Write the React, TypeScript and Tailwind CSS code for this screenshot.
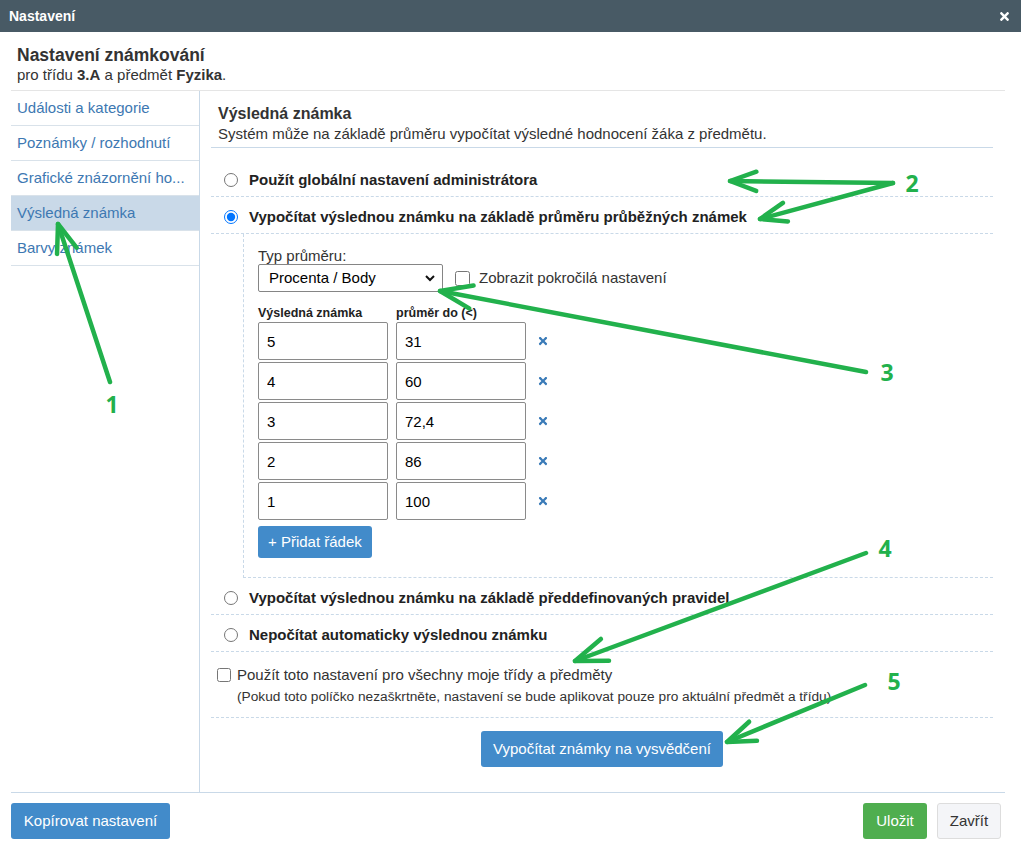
import { FaTimes } from 'react-icons/fa';

const menu = ['Události a kategorie', 'Poznámky / rozhodnutí', 'Grafické znázornění ho...', 'Výsledná známka', 'Barvy známek'];

const rows = [
  ['5', '31'],
  ['4', '60'],
  ['3', '72,4'],
  ['2', '86'],
  ['1', '100'],
];

// green annotation arrows drawn over the screenshot
const arrows = [
  { x1: 110, y1: 382, x2: 58, y2: 224, len: 30 },
  { x1: 893, y1: 183, x2: 730, y2: 181, len: 28 },
  { x1: 893, y1: 183, x2: 760, y2: 219, len: 28 },
  { x1: 866, y1: 372, x2: 440, y2: 291, len: 34 },
  { x1: 866, y1: 553, x2: 575, y2: 661, len: 34 },
  { x1: 865, y1: 685, x2: 727, y2: 742, len: 30 },
];

const labels = [
  { t: '1', x: 112, y: 413 },
  { t: '2', x: 912, y: 192 },
  { t: '3', x: 887, y: 381 },
  { t: '4', x: 885, y: 557 },
  { t: '5', x: 894, y: 690 },
];

function head(a: { x1: number; y1: number; x2: number; y2: number; len: number }) {
  const ang = Math.atan2(a.y1 - a.y2, a.x1 - a.x2);
  const p = (d: number) => `${a.x2 + a.len * Math.cos(ang + d)},${a.y2 + a.len * Math.sin(ang + d)}`;
  return `${p(0.35)} ${a.x2},${a.y2} ${p(-0.35)}`;
}

function Radio({ label, checked }: { label: string; checked?: boolean }) {
  return (
    <label className="flex items-center h-[37px] pl-[13px] pt-[4px] border-b border-dashed border-[#c9d9e8]">
      <input type="radio" name="mode" defaultChecked={checked} className="w-[14px] h-[14px] m-0" />
      <span className="ml-[11px] text-[15px] font-bold text-[#222]">{label}</span>
    </label>
  );
}

export default function App() {
  return (
    <div className="relative w-[1021px] h-[859px] bg-white font-['Liberation_Sans',Arial,sans-serif] text-[#333]">
      <div className="h-8 bg-[#485a65] flex items-center justify-between pl-[9px] pr-[10px]">
        <span className="text-white font-bold text-[14px]">Nastavení</span>
        <FaTimes className="text-white w-[13px] h-[13px]" />
      </div>

      <div className="ml-[11px] w-[994px]">
        <div className="pt-[13px] pb-[7px] pl-[6px] border-b border-[#e5e5e5]">
          <h1 className="text-[17.5px] leading-[21px] font-bold text-[#333]">Nastavení známkování</h1>
          <p className="text-[15px] leading-[17px]">
            pro třídu <b>3.A</b> a předmět <b>Fyzika</b>.
          </p>
        </div>

        <div className="flex">
          <div className="w-[189px] flex-shrink-0 border-r border-[#c9d9e8]">
            {menu.map((m) => (
              <div
                key={m}
                className={`h-[35px] flex items-center pl-[6px] text-[15px] text-[#3d78b2] border-b border-[#d9e2ea] ${m === 'Výsledná známka' ? 'bg-[#c9d9e8]' : ''}`}
              >
                {m}
              </div>
            ))}
          </div>

          <div className="flex-1 pl-[11px] pr-[12px] pt-[13px] pb-[25px]">
            <div className="pl-[7px] pb-[4px] border-b border-[#c9d9e8]">
              <h2 className="text-[16px] leading-[20px] font-bold text-[#333]">Výsledná známka</h2>
              <p className="text-[15px] leading-[19px]">Systém může na základě průměru vypočítat výsledné hodnocení žáka z předmětu.</p>
            </div>

            <div className="mt-[12px]">
              <Radio label="Použít globální nastavení administrátora" />
              <Radio label="Vypočítat výslednou známku na základě průměru průběžných známek" checked />

              <div className="ml-[32px] border-l border-b border-dashed border-[#c9d9e8] pl-[14px] pt-[13px] pb-[19px]">
                <div className="text-[15px] leading-[17px]">Typ průměru:</div>
                <div className="flex items-center">
                  <div className="w-[185px] h-[28px] border border-[#858585] rounded-[2px] flex items-center justify-between pl-[10px] pr-[6px] text-[15px] text-black">
                    <span>Procenta / Body</span>
                    <svg viewBox="0 0 12 12" className="w-[12px] h-[12px]">
                      <path d="M2 4l4 4 4-4" fill="none" stroke="#111" strokeWidth="2" />
                    </svg>
                  </div>
                  <input type="checkbox" className="ml-[12px] w-[15px] h-[15px] m-0" />
                  <span className="ml-[9px] text-[15px]">Zobrazit pokročilá nastavení</span>
                </div>

                <div className="flex mt-[14px] text-[12.5px] leading-[14px] font-bold text-[#222]">
                  <span className="w-[138px]">Výsledná známka</span>
                  <span>průměr do (&lt;)</span>
                </div>
                <div className="mt-[2px] flex flex-col gap-[2px]">
                  {rows.map(([g, v]) => (
                    <div key={g} className="flex items-center">
                      <input readOnly value={g} className="w-[130px] h-[38px] border border-[#8a8a8a] rounded-[2px] pl-[8px] text-[15px] text-black" />
                      <input readOnly value={v} className="ml-[8px] w-[130px] h-[38px] border border-[#8a8a8a] rounded-[2px] pl-[8px] text-[15px] text-black" />
                      <FaTimes className="ml-[11px] w-[12px] h-[12px] text-[#3a7bb8]" />
                    </div>
                  ))}
                </div>
                <button className="mt-[6px] h-[32px] px-[10px] rounded-[3px] bg-[#428bca] text-white text-[15px]">+ Přidat řádek</button>
              </div>

              <Radio label="Vypočítat výslednou známku na základě předdefinovaných pravidel" />
              <Radio label="Nepočítat automaticky výslednou známku" />

              <div className="pt-[14px] pb-[11px] border-b border-dashed border-[#c9d9e8] text-[15px] leading-[18px]">
                <label className="flex items-center pl-[6px]">
                  <input type="checkbox" className="w-[14px] h-[14px] m-0" />
                  <span className="ml-[6px]">Použít toto nastavení pro všechny moje třídy a předměty</span>
                </label>
                <p className="mt-[4px] pl-[26px] text-[13.7px]">(Pokud toto políčko nezaškrtněte, nastavení se bude aplikovat pouze pro aktuální předmět a třídu)</p>
              </div>

              <div className="mt-[13px] flex justify-center">
                <button className="h-[36px] px-[12px] rounded-[3px] bg-[#428bca] text-white text-[15px]">Vypočítat známky na vysvědčení</button>
              </div>
            </div>
          </div>
        </div>

        <div className="border-t border-[#c9d9e8] pt-[10px] flex justify-between pr-[4px]">
          <button className="h-[36px] w-[159px] rounded-[3px] bg-[#428bca] text-white text-[15px]">Kopírovat nastavení</button>
          <div className="flex gap-[10px]">
            <button className="h-[36px] w-[64px] rounded-[3px] bg-[#4fae4f] text-white text-[15px]">Uložit</button>
            <button className="h-[36px] w-[64px] rounded-[3px] bg-[#f4f5f8] border border-[#dddddd] text-[#333] text-[15px]">Zavřít</button>
          </div>
        </div>
      </div>

      <svg className="absolute inset-0 pointer-events-none" width="1021" height="859">
        {arrows.map((a, i) => (
          <g key={i} stroke="#22b14c" strokeWidth="4.5" strokeLinecap="round" strokeLinejoin="round" fill="none">
            <line x1={a.x1} y1={a.y1} x2={a.x2} y2={a.y2} />
            <polyline points={head(a)} />
          </g>
        ))}
        {labels.map((l) => (
          <text key={l.t} x={l.x} y={l.y} textAnchor="middle" fill="#22b14c" fontSize="23" fontWeight="bold" fontFamily="'Open Sans', sans-serif">
            {l.t}
          </text>
        ))}
      </svg>
    </div>
  );
}
